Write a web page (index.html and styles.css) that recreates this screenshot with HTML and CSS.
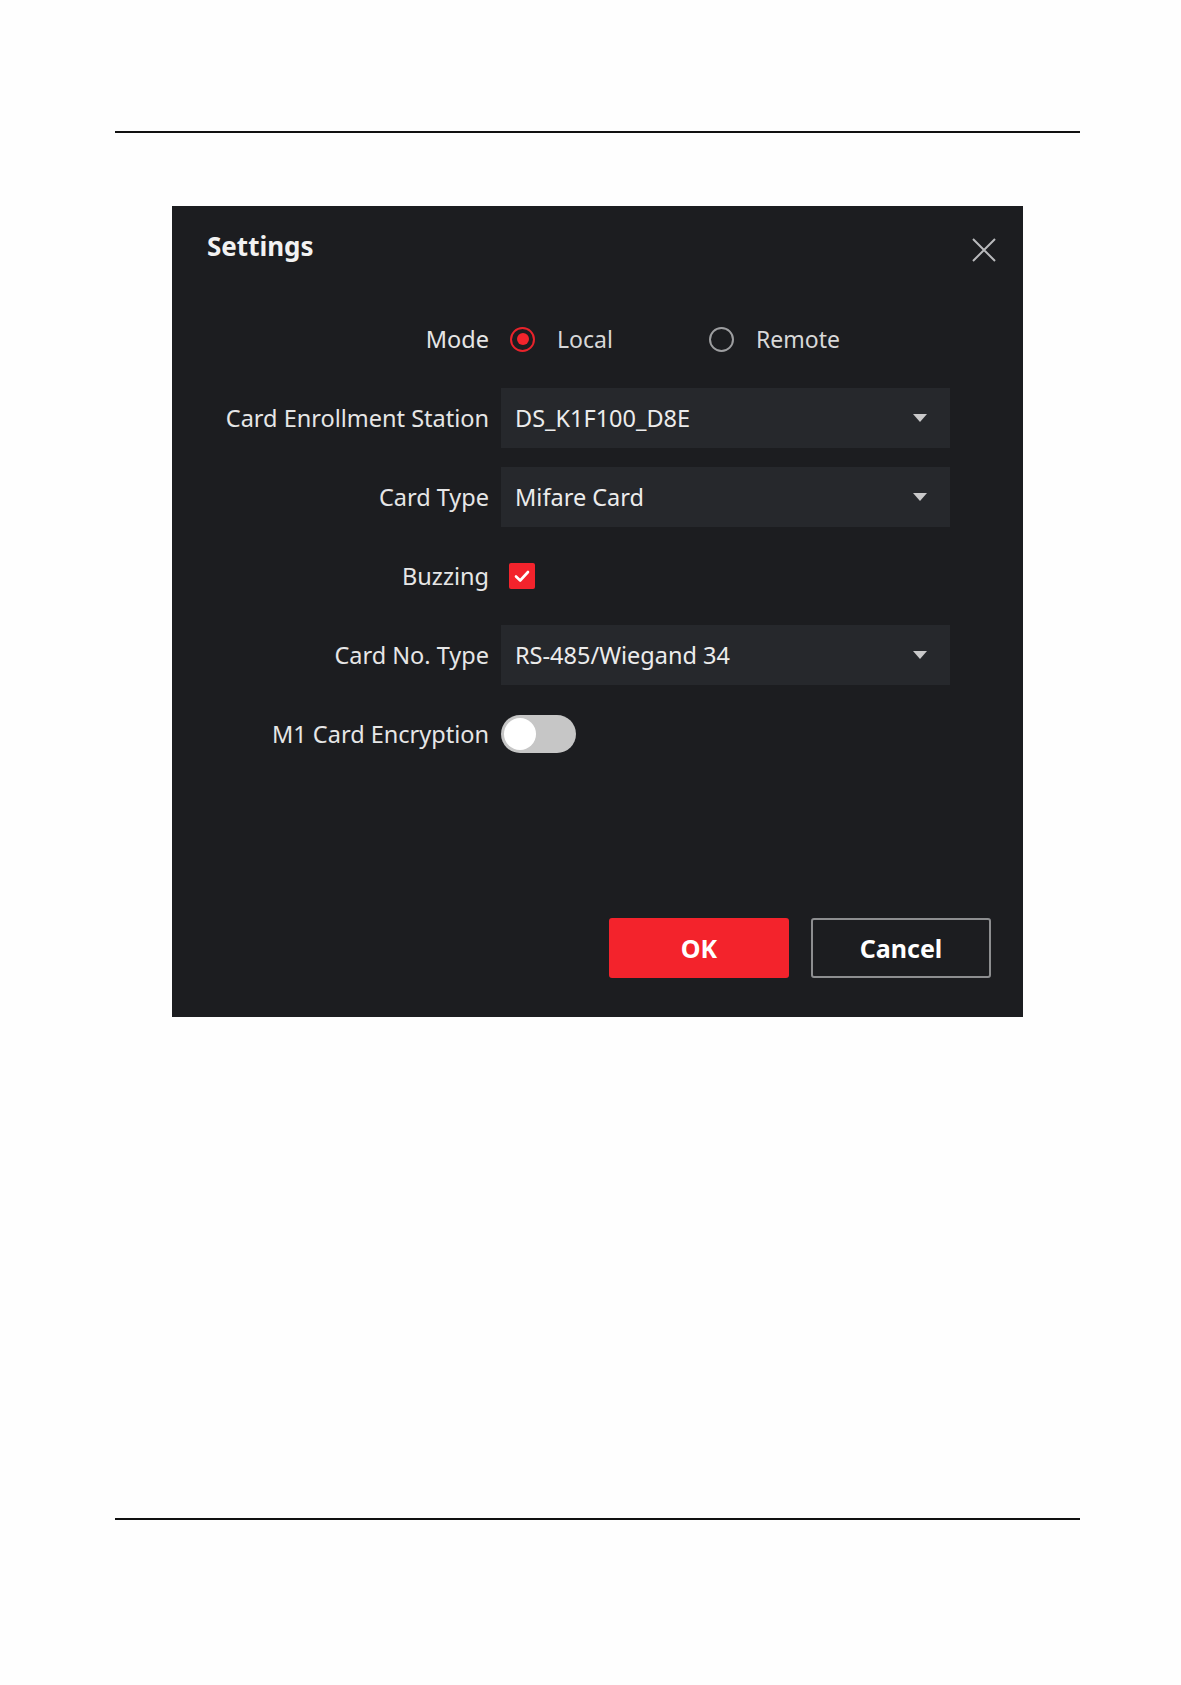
FILE: index.html
```
<!DOCTYPE html>
<html lang="en">
<head>
<meta charset="utf-8">
<title>Settings</title>
<link rel="stylesheet" href="styles.css">
</head>
<body>
<div class="page">
  <div class="rule rule-top"></div>
  <div class="dialog">
    <div class="dialog-header">
      <div class="dialog-title">Settings</div>
      <svg class="close" width="24" height="24" viewBox="0 0 24 24"><path d="M1 1 L23 23 M23 1 L1 23" stroke="#b9babc" stroke-width="2" fill="none"/></svg>
    </div>
    <div class="form">
      <div class="label">Mode</div>
      <div class="control radios">
        <div class="radio-opt first">
          <span class="radio checked"><span class="dot"></span></span>
          <span class="opt-text">Local</span>
        </div>
        <div class="radio-opt">
          <span class="radio"></span>
          <span class="opt-text">Remote</span>
        </div>
      </div>

      <div class="label">Card Enrollment Station</div>
      <div class="control">
        <div class="select"><span>DS_K1F100_D8E</span><span class="arrow"></span></div>
      </div>

      <div class="label">Card Type</div>
      <div class="control">
        <div class="select"><span>Mifare Card</span><span class="arrow"></span></div>
      </div>

      <div class="label">Buzzing</div>
      <div class="control">
        <span class="checkbox"><svg width="26" height="26" viewBox="0 0 26 26"><path d="M7 13.5 L11.2 17.5 L19 9" stroke="#ffffff" stroke-width="2.6" fill="none" stroke-linecap="round" stroke-linejoin="round"/></svg></span>
      </div>

      <div class="label">Card No. Type</div>
      <div class="control">
        <div class="select"><span>RS-485/Wiegand 34</span><span class="arrow"></span></div>
      </div>

      <div class="label">M1 Card Encryption</div>
      <div class="control">
        <span class="toggle"><span class="knob"></span></span>
      </div>
    </div>
    <div class="footer">
      <button class="btn btn-ok">OK</button>
      <button class="btn btn-cancel">Cancel</button>
    </div>
  </div>
  <div class="rule rule-bottom"></div>
</div>
</body>
</html>
```

FILE: styles.css
```
html, body {
  margin: 0;
  padding: 0;
  background: #fefefe;
}
body {
  font-family: "Noto Sans", "Open Sans", sans-serif;
  width: 1181px;
  height: 1685px;
  overflow: hidden;
}
.page {
  padding-top: 131px;
}
.rule {
  margin-left: 115px;
  width: 965px;
  height: 2px;
  background: #111;
}
.dialog {
  margin-top: 73px;
  margin-left: 172px;
  width: 851px;
  height: 811px;
  background: #1c1d20;
  display: flex;
  flex-direction: column;
  box-sizing: border-box;
}
.dialog-header {
  height: 80px;
  padding: 0 27px 0 35px;
  display: flex;
  align-items: center;
  justify-content: space-between;
}
.dialog-title {
  color: #f2f2f2;
  font-weight: 700;
  font-size: 26px;
}
.close {
  margin-top: 8px;
}
.form {
  margin-top: 23px;
  display: grid;
  grid-template-columns: 317px 449px;
  grid-auto-rows: 60px;
  row-gap: 19px;
  column-gap: 12px;
}
.label {
  color: #e6e6e6;
  font-size: 23.5px;
  text-align: right;
  display: flex;
  align-items: center;
  justify-content: flex-end;
}
.control {
  display: flex;
  align-items: center;
}
.radio-opt {
  display: flex;
  align-items: center;
  width: 199px;
}
.radio-opt.first {
  margin-left: 9px;
}
.radio {
  width: 25px;
  height: 25px;
  box-sizing: border-box;
  border: 2px solid #9d9ea0;
  border-radius: 50%;
  display: flex;
  align-items: center;
  justify-content: center;
  flex: none;
}
.radio.checked {
  border-color: #e8232b;
}
.dot {
  width: 12px;
  height: 12px;
  border-radius: 50%;
  background: #f3242c;
}
.opt-text {
  color: #d8d8d8;
  font-size: 23px;
  margin-left: 22px;
}
.select {
  width: 449px;
  height: 60px;
  background: #26282c;
  box-sizing: border-box;
  padding: 0 23px 0 14px;
  display: flex;
  align-items: center;
  justify-content: space-between;
  color: #ececec;
  font-size: 23.5px;
}
.arrow {
  width: 0;
  height: 0;
  border-left: 7px solid transparent;
  border-right: 7px solid transparent;
  border-top: 8px solid #c9c9ca;
}
.checkbox {
  margin-left: 8px;
  width: 26px;
  height: 26px;
  background: #f3232c;
  border-radius: 2px;
  display: flex;
}
.toggle {
  width: 75px;
  height: 38px;
  border-radius: 19px;
  background: #c6c6c6;
  display: flex;
  align-items: center;
  padding-left: 3px;
  box-sizing: border-box;
}
.knob {
  width: 32px;
  height: 32px;
  border-radius: 50%;
  background: #ffffff;
}
.footer {
  margin-top: 154px;
  padding-right: 32px;
  display: flex;
  justify-content: flex-end;
  gap: 22px;
}
.btn {
  width: 180px;
  height: 60px;
  font-family: "Noto Sans", "Open Sans", sans-serif;
  font-weight: 700;
  font-size: 25px;
  color: #ffffff;
  border-radius: 3px;
  padding: 0;
}
.btn-ok {
  background: #f3232c;
  border: none;
}
.btn-cancel {
  background: #1c1d20;
  border: 2px solid #8d8e90;
}
.rule-bottom {
  margin-top: 501px;
}
```
